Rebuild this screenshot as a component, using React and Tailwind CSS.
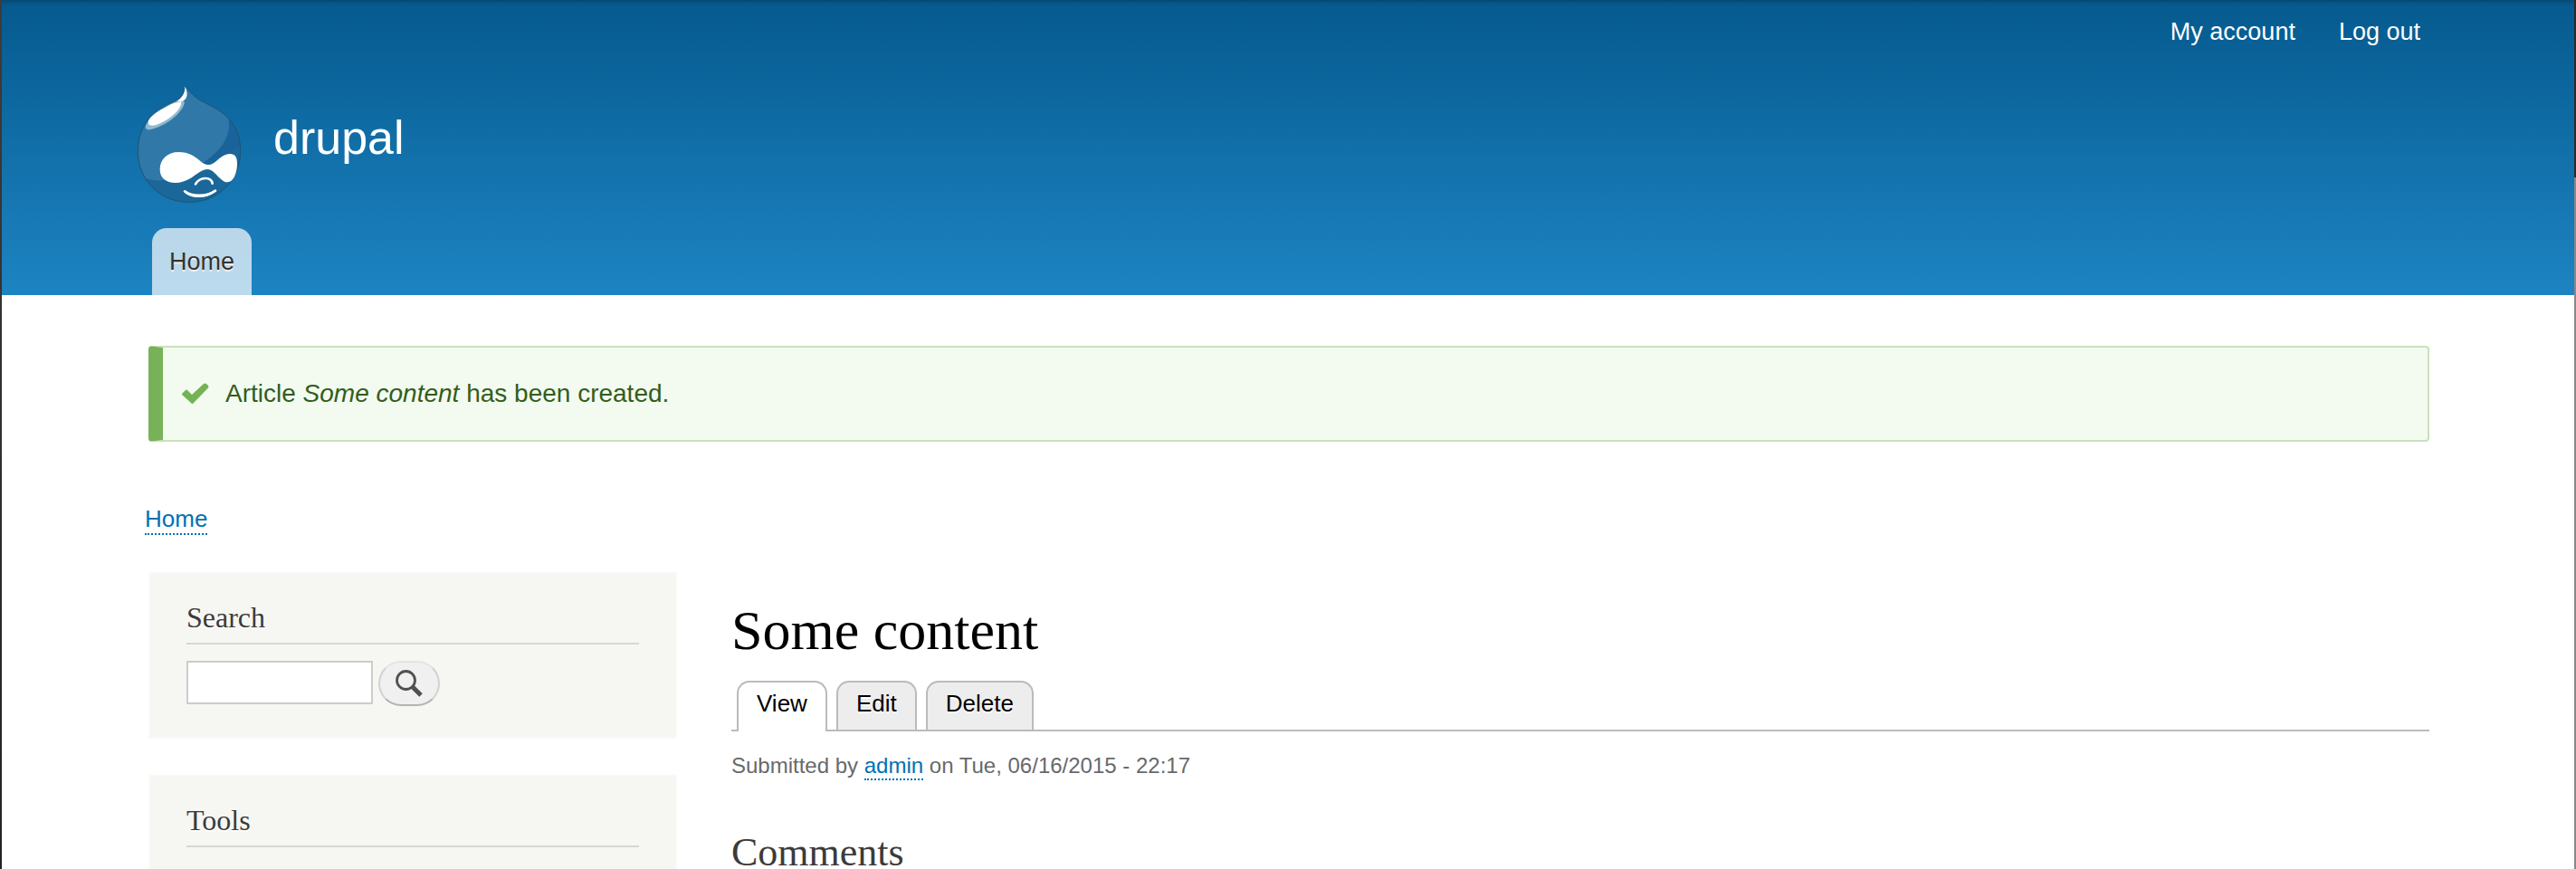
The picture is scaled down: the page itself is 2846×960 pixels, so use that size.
const links = [
  { label: "My account", href: "#account" },
  { label: "Log out", href: "#logout" },
];

const tabs = [
  { label: "View", active: true },
  { label: "Edit", active: false },
  { label: "Delete", active: false },
];

function Logo() {
  return (
    <svg viewBox="0 0 342 390" className="h-[130px] w-[114px]" aria-hidden="true">
      <defs>
        <clipPath id="drop">
          <path d="M158 2 C166 14 184 36 207 50 C240 68 262 76 288 98 C322 126 341 165 341 219 C341 318 264 388 171 388 C77 388 1 318 1 219 C1 152 34 108 62 86 C90 62 128 54 146 36 C156 26 158 12 158 2Z" />
        </clipPath>
      </defs>
      <g clipPath="url(#drop)">
        <path fill="#19639a" d="M0 0h342v390H0z" />
        <path fill="#1b6799" d="M0 290C90 330 250 250 342 200V390H0z" />
        <path
          fill="#3078a7"
          d="M0 0H260L300 100C312 160 290 205 225 252L150 300C110 318 60 322 24 308L0 290Z"
        />
      </g>
      <path
        fill="none"
        stroke="#1f5474"
        strokeWidth="3"
        d="M158 2 C166 14 184 36 207 50 C240 68 262 76 288 98 C322 126 341 165 341 219 C341 318 264 388 171 388 C77 388 1 318 1 219 C1 152 34 108 62 86 C90 62 128 54 146 36 C156 26 158 12 158 2Z"
      />
      <path
        fill="#91b9d1"
        d="M28 132C22 152 38 150 62 142C104 126 150 90 156 56L148 50L130 54C90 74 50 92 28 132Z"
      />
      <path
        fill="#fff"
        d="M36 118C32 136 46 136 62 132C96 120 136 92 144 64C150 46 126 56 110 64C76 82 46 98 36 118ZM157 4C162 14 168 34 160 44C154 54 142 54 122 60C146 44 158 30 157 4Z"
      />
      <path
        fill="#fff"
        d="M136 222C170 222 190 236 208 252C226 268 240 268 258 254C276 240 288 228 306 228C324 228 330 240 330 260C330 290 318 322 298 322C282 322 270 304 254 290C240 276 226 276 206 288C182 304 160 324 126 324C94 324 74 308 74 280C74 246 98 222 136 222Z"
      />
      <path
        fill="none"
        stroke="#fff"
        strokeWidth="8"
        strokeLinecap="round"
        d="M192 328C206 304 244 302 248 326M156 352C178 374 226 374 258 350"
      />
      <path fill="none" stroke="#fff" strokeWidth="6" strokeLinecap="round" d="M158 352C180 368 226 370 254 352" />
    </svg>
  );
}

function Block({ title, children }) {
  return (
    <section className="border-2 border-[#f9f9f9] bg-[#f6f6f2] px-10 pt-8 pb-[34px]">
      <h2 className="border-b-2 border-[#d6d6d6] pb-3 font-['Liberation_Serif',serif] text-[32px] leading-8 text-[#3b3b3b] [text-shadow:0_2px_0_#fff]">
        {title}
      </h2>
      {children}
    </section>
  );
}

function DottedLink({ children }) {
  return (
    <a href="#" className="border-b-2 border-dotted border-[#0071b3] pb-px text-[#0071b3]">
      {children}
    </a>
  );
}

export default function App() {
  return (
    <div className="flex min-h-screen bg-white font-['Liberation_Sans',Arial,sans-serif]">
      <div className="w-0.5 shrink-0 bg-linear-to-b from-[#3f3b3a] to-[#222224]" />
      <div className="min-w-0 flex-1">
        <header className="bg-linear-to-b from-[#055a8e] to-[#1d84c3] pr-[162px] pl-[150px] shadow-[inset_0_6px_6px_-6px_rgba(0,0,0,0.4)]">
          <nav aria-label="User" className="flex justify-end gap-12 px-2 pt-5 text-[27px] leading-[30px] text-white">
            {links.map((l) => (
              <a key={l.label} href={l.href}>
                {l.label}
              </a>
            ))}
          </nav>
          <a href="#" className="mt-11 flex w-fit items-start gap-9 text-white">
            <Logo />
            <span className="pt-7 text-[52px] leading-[60px]">drupal</span>
          </a>
          <nav aria-label="Main" className="flex pt-7 pl-4">
            <a
              href="#"
              className="rounded-t-2xl bg-white/70 px-[19px] py-5 text-[27px] leading-[34px] text-[#333] [text-shadow:0_2px_0_#eee]"
            >
              Home
            </a>
          </nav>
        </header>

        <div className="pr-40 pl-[162px]">
          <div
            role="status"
            className="mt-14 flex items-center gap-[18px] rounded-[4px] border-2 border-l-16 border-[#c9e1bd] border-l-[#77b259] bg-[#f3faef] py-[34px] pl-[21px] text-[28px] leading-[34px] text-[#325e1c]"
          >
            <svg viewBox="0 0 30 24" className="h-6 w-[30px]" aria-hidden="true">
              <path fill="#73b355" d="M0 12L4 8Q5 7 6 8L11 13L24 1Q25.500 0 27 1L29 3Q30 4 29 5.500L13 22Q11.500 24 10 22L0 13Z" />
            </svg>
            <p>
              Article <em>Some content</em> has been created.
            </p>
          </div>

          <nav aria-label="Breadcrumb" className="-ml-1 pt-[68px] text-[26px] leading-[34px]">
            <DottedLink>Home</DottedLink>
          </nav>

          <div className="flex items-start gap-[60px] pt-[42px]">
            <aside className="flex w-[584px] shrink-0 flex-col gap-10">
              <Block title="Search">
                <form className="flex items-start gap-1.5 pt-[18px]" onSubmit={(e) => e.preventDefault()}>
                  <input
                    type="search"
                    aria-label="Search"
                    className="h-12 w-[206px] appearance-none border-2 border-[#ccc] bg-white px-2 text-[26px] outline-none"
                  />
                  <button
                    type="submit"
                    aria-label="Search"
                    className="flex h-[50px] w-[68px] items-center justify-center rounded-[26px] border-2 border-[#d2d2d2] border-t-[#e4e4e4] border-b-[#b4b4b4] bg-[#f0f0f0]"
                  >
                    <svg viewBox="0 0 30 30" className="size-[30px]" fill="none" stroke="#505050" aria-hidden="true">
                      <circle cx="11.500" cy="11.500" r="10" strokeWidth="2.800" />
                      <path strokeWidth="5" d="M18.500 18.500L28 28" />
                    </svg>
                  </button>
                </form>
              </Block>
              <Block title="Tools" />
            </aside>

            <main className="min-w-0 flex-1">
              <h1 className="pt-7 font-['Liberation_Serif',serif] text-[62px] leading-[72px] text-black">Some content</h1>
              <nav
                aria-label="Tabs"
                className="mt-5 flex items-end gap-2.5 border-b-2 border-[#bbb] pl-1.5 text-[26px] leading-[30px] text-black"
              >
                {tabs.map((t) => (
                  <a
                    key={t.label}
                    href="#"
                    className={
                      t.active
                        ? "-mb-0.5 rounded-t-[14px] border-2 border-b-0 border-[#bbb] bg-white px-5 pt-2 pb-4"
                        : "rounded-t-[14px] border-2 border-b-0 border-[#bbb] bg-[#ededed] px-5 pt-2 pb-3.5 [text-shadow:0_2px_0_#fff]"
                    }
                  >
                    {t.label}
                  </a>
                ))}
              </nav>
              <p className="pt-[22px] text-[24px] leading-8 text-[#68696b]">
                Submitted by <DottedLink>admin</DottedLink> on Tue, 06/16/2015 - 22:17
              </p>
              <h2 className="pt-[58px] font-['Liberation_Serif',serif] text-[44px] leading-[44px] text-[#3b3b3b]">
                Comments
              </h2>
            </main>
          </div>
        </div>
      </div>
      <div className="flex w-0.5 shrink-0 flex-col">
        <div className="h-[196px] bg-[#2c2a2b]" />
        <div className="flex-1 bg-[#88888a]" />
      </div>
    </div>
  );
}
